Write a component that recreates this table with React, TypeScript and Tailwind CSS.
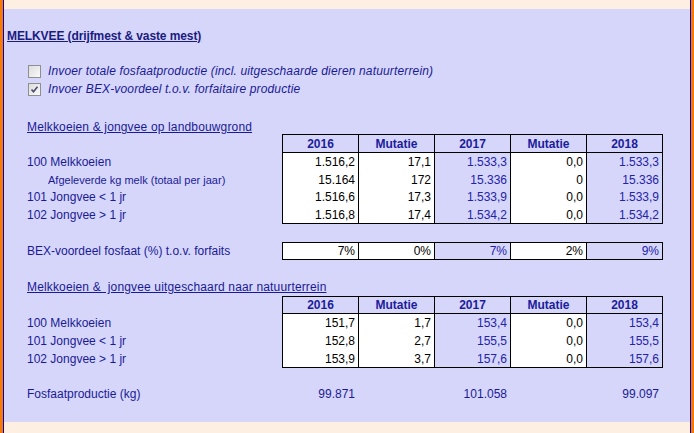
const LAV = "bg-[#d6d6fb]"

type Row = { label: string; small?: boolean; vals: string[] }

const TABLE1: Row[] = [
  { label: "100 Melkkoeien", vals: ["1.516,2", "17,1", "1.533,3", "0,0", "1.533,3"] },
  { label: "Afgeleverde kg melk (totaal per jaar)", small: true, vals: ["15.164", "172", "15.336", "0", "15.336"] },
  { label: "101 Jongvee < 1 jr", vals: ["1.516,6", "17,3", "1.533,9", "0,0", "1.533,9"] },
  { label: "102 Jongvee > 1 jr", vals: ["1.516,8", "17,4", "1.534,2", "0,0", "1.534,2"] },
]

const TABLE2: Row[] = [
  { label: "100 Melkkoeien", vals: ["151,7", "1,7", "153,4", "0,0", "153,4"] },
  { label: "101 Jongvee < 1 jr", vals: ["152,8", "2,7", "155,5", "0,0", "155,5"] },
  { label: "102 Jongvee > 1 jr", vals: ["153,9", "3,7", "157,6", "0,0", "157,6"] },
]

const HEADERS = ["2016", "Mutatie", "2017", "Mutatie", "2018"]

const Cell = ({ value, idx }: { value: string; idx: number }) => {
  const calc = idx === 2 || idx === 4
  return (
    <div
      className={`w-[76px] border-r border-black flex items-center justify-end pr-[3px] ${
        calc ? `${LAV} text-[#2323a8]` : "bg-white text-black"
      }`}
    >
      {value}
    </div>
  )
}

const HeaderRow = ({ h }: { h: string }) => (
  <div className={`flex ${h}`}>
    <div className="w-[255px]" />
    <div className="flex border-l border-y border-black">
      {HEADERS.map((t, i) => (
        <div
          key={i}
          className={`w-[76px] border-r border-black flex items-center justify-center font-bold text-[#1c1c9c] ${LAV}`}
        >
          {t}
        </div>
      ))}
    </div>
  </div>
)

const DataRows = ({ rows, heights }: { rows: Row[]; heights: string[] }) => (
  <>
    {rows.map((r, ri) => {
      const last = ri === rows.length - 1
      return (
        <div key={ri} className={`flex ${heights[ri]}`}>
          <div
            className={`w-[255px] flex items-center text-[#1a1a96] ${
              r.small ? "pl-[21px] text-[11px]" : ""
            }`}
          >
            {r.label}
          </div>
          <div className={`flex border-l border-black ${last ? "border-b" : ""}`}>
            {r.vals.map((v, i) => (
              <Cell key={i} value={v} idx={i} />
            ))}
          </div>
        </div>
      )
    })}
  </>
)

const Checkbox = ({ checked }: { checked?: boolean }) => (
  <div className="w-[13px] h-[13px] border border-[#8e8f8f] bg-gradient-to-br from-[#dcdcdc] to-[#fafafa] flex items-center justify-center">
    {checked && (
      <svg width="9" height="9" viewBox="0 0 9 9">
        <path d="M1.5 4.5 L3.5 6.8 L7.5 1.8" fill="none" stroke="#4a4a6a" strokeWidth="1.6" />
      </svg>
    )}
  </div>
)

export default function App() {
  return (
    <div
      className="flex h-[433px] w-[694px] text-[12px] leading-[14px]"
      style={{ fontFamily: '"Liberation Sans", Arial, sans-serif' }}
    >
      <div className="w-[3px] bg-[#f77b00]" />
      <div className="w-[1px] bg-[#0000c8]" />
      <div className="flex-1 flex flex-col">
        <div className="h-[9px] bg-[#fdf0e3]" />
        <div className={`flex-1 ${LAV} flex flex-col`}>
          {/* title */}
          <div className="mt-[19px] h-[16px] leading-[16px] pl-[3px] font-bold underline text-[#1b1b80] tracking-[-0.1px]">
            MELKVEE (drijfmest &amp; vaste mest)
          </div>

          {/* checkboxes */}
          <div className="mt-[18px] h-[18px] flex items-center pl-[24px] gap-[7px] italic text-[#1a1a96] tracking-[0.15px]">
            <Checkbox />
            <span>Invoer totale fosfaatproductie (incl. uitgeschaarde dieren natuurterrein)</span>
          </div>
          <div className="h-[18px] flex items-center pl-[24px] gap-[7px] italic text-[#1a1a96] tracking-[0.15px]">
            <Checkbox checked />
            <span>Invoer BEX-voordeel t.o.v. forfaitaire productie</span>
          </div>

          {/* table 1 */}
          <div className="mt-[21px] h-[15px] leading-[16px] pl-[23px] underline text-[#1a1a96] tracking-[0.15px]">
            Melkkoeien &amp; jongvee op landbouwgrond
          </div>
          <div className="pl-[23px] flex flex-col">
            <HeaderRow h="h-[19px]" />
            <DataRows rows={TABLE1} heights={["h-[18px]", "h-[17px]", "h-[18px]", "h-[18px]"]} />
          </div>

          {/* percentages */}
          <div className="mt-[18px] pl-[23px] flex h-[18px]">
            <div className="w-[255px] flex items-center text-[#1a1a96]">
              BEX-voordeel fosfaat (%) t.o.v. forfaits
            </div>
            <div className="flex border-l border-y border-black">
              {["7%", "0%", "7%", "2%", "9%"].map((v, i) => (
                <Cell key={i} value={v} idx={i} />
              ))}
            </div>
          </div>

          {/* table 2 */}
          <div className="mt-[19px] h-[17px] leading-[16px] pl-[23px] underline text-[#1a1a96] whitespace-pre tracking-[0.15px]">
            {"Melkkoeien &  jongvee uitgeschaard naar natuurterrein"}
          </div>
          <div className="pl-[23px] flex flex-col">
            <HeaderRow h="h-[18px]" />
            <DataRows rows={TABLE2} heights={["h-[18px]", "h-[18px]", "h-[18px]"]} />
          </div>

          {/* totals */}
          <div className="mt-[17px] pl-[23px] flex h-[18px] text-[#1a1a96]">
            <div className="w-[255px] flex items-center">Fosfaatproductie (kg)</div>
            <div className="flex pl-[1px]">
              {["99.871", "", "101.058", "", "99.097"].map((v, i) => (
                <div key={i} className="w-[76px] flex items-center justify-end pr-[4px]">
                  {v}
                </div>
              ))}
            </div>
          </div>
        </div>
        <div className="h-[11px] bg-[#fdf0e3]" />
      </div>
      <div className="w-[1px] bg-[#0000c8]" />
      <div className="w-[3px] bg-[#f77b00]" />
    </div>
  )
}
